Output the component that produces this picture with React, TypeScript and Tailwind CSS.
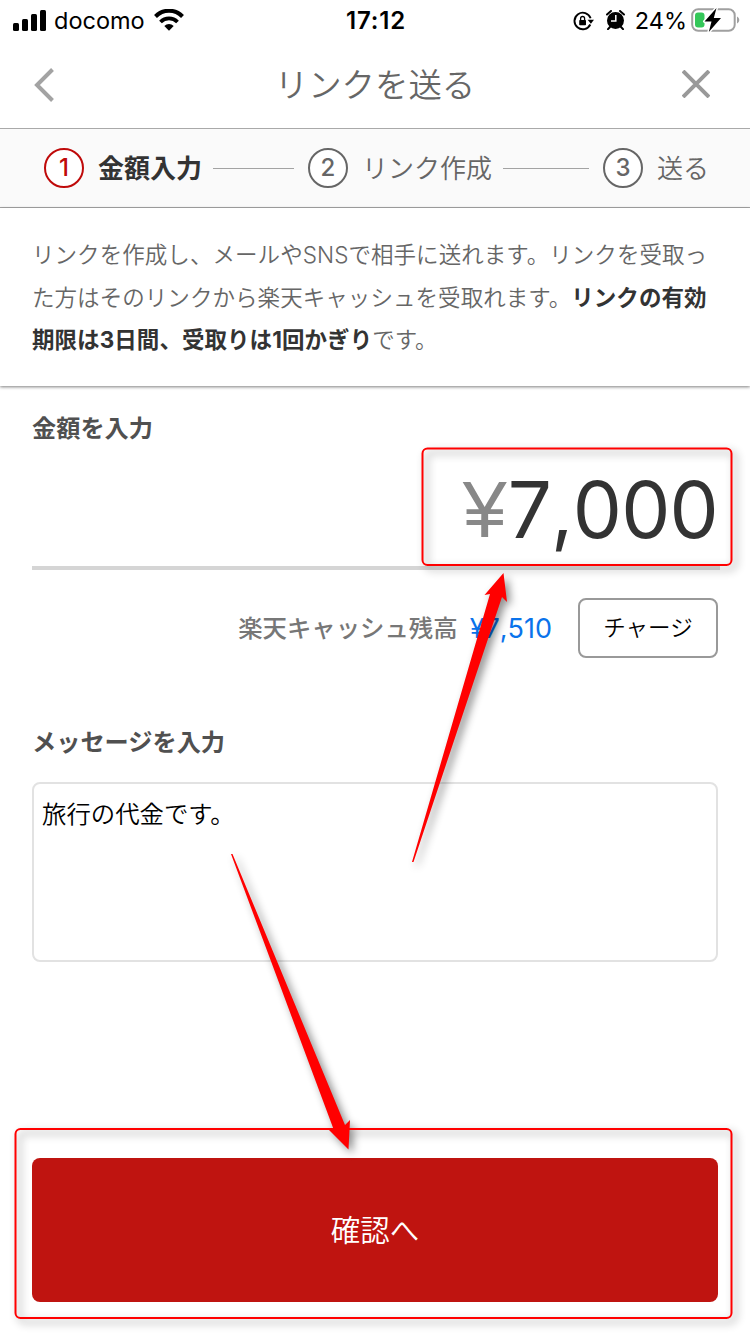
import type { ReactNode } from 'react';

interface StepProps {
  number: number;
  label: string;
  active?: boolean;
}

const DESCRIPTION = [
  'リンクを作成し、メールやSNSで相手に送れます。リンクを受取っ',
  'た方はそのリンクから楽天キャッシュを受取れます。',
];

export default function App() {
  return (
    <div className="relative flex h-[1334px] w-[750px] flex-col overflow-hidden bg-white font-['Inter','Noto_Sans_CJK_JP',sans-serif] text-[#333]">
      <StatusBar />
      <NavBar />

      <div className="flex h-20 shrink-0 items-center border-y border-[#a9a9a9] bg-[#fafafa] pl-11">
        <Step number={1} label="金額入力" active />
        <div className="mr-[14px] ml-[11px] h-px w-[81px] bg-[#a3a3a3]" />
        <Step number={2} label="リンク作成" />
        <div className="mr-[14px] ml-[11px] h-px w-[86px] bg-[#a3a3a3]" />
        <Step number={3} label="送る" />
      </div>

      <div className="h-[178px] shrink-0 pt-[26px] pl-8 text-[22.5px] leading-[42.5px] font-[350] tracking-[0.06px] whitespace-nowrap text-[#666] shadow-[0_1px_3px_rgba(0,0,0,0.5)]">
        <p>{DESCRIPTION[0]}</p>
        <p>
          {DESCRIPTION[1]}
          <strong className="font-bold text-[#333]">リンクの有効</strong>
        </p>
        <p>
          <strong className="font-bold text-[#333]">期限は3日間、受取りは1回かぎり</strong>
          です。
        </p>
      </div>

      <main className="flex flex-col px-8">
        <Heading className="mt-[25px]">金額を入力</Heading>
        <div className="mt-[15px] flex h-[108px] w-[688px] items-center justify-end border-b-4 border-[#d5d5d5] pr-[2px] pb-[9px] leading-none whitespace-nowrap">
          <span className="mr-px font-['Liberation_Sans',sans-serif] text-[79px] text-[#888]">¥</span>
          <span className="text-[78px] tracking-[-0.8px] [font-kerning:none]">7,000</span>
        </div>

        <div className="mt-7 flex h-[60px] items-center justify-end whitespace-nowrap">
          <span className="text-[24.4px] font-medium text-[#777]">楽天キャッシュ残高</span>
          <span className="mt-0.5 ml-3 text-[27px] text-[#0a73eb] [font-kerning:none]">¥7,510</span>
          <button
            type="button"
            className="ml-[26px] h-[60px] w-[140px] rounded-lg border-2 border-[#999] text-[22.5px] font-[350] text-black"
          >
            チャージ
          </button>
        </div>

        <Heading className="mt-[67px]">メッセージを入力</Heading>
        <div className="mt-[21px] h-[180px] rounded-lg border-2 border-[#e2e2e2] px-2 pt-3 text-[24.4px] leading-9 font-[350] text-black">
          旅行の代金です。
        </div>

        <button
          type="button"
          className="mt-[196px] h-36 rounded-lg bg-[#bf1410] text-[29.5px] font-[350] text-white"
        >
          確認へ
        </button>
      </main>

      <Annotations />
    </div>
  );
}

function StatusBar() {
  return (
    <div className="flex h-10 shrink-0 items-center text-black">
      <div className="flex flex-1 items-center pl-[13px]">
        <svg width="33" height="21" viewBox="0 0 33 21">
          <rect x="0" y="13" width="6" height="8" rx="1.5" />
          <rect x="9" y="9" width="6" height="12" rx="1.5" />
          <rect x="18" y="4" width="6" height="17" rx="1.5" />
          <rect x="27" y="0" width="6" height="21" rx="1.5" />
        </svg>
        <span className="mt-0.5 ml-2 text-[23.5px]">docomo</span>
        <svg className="ml-[9px]" width="30" height="22" viewBox="0 0 30 22" fill="none" stroke="#000">
          <path d="M1.5 7.5C9-.3 21-.3 28.5 7.5" strokeWidth="4" />
          <path d="M6.5 13C11.2 8.2 18.8 8.2 23.5 13" strokeWidth="3.8" />
          <path d="M10.3 17C13 14.2 17 14.2 19.7 17L15 21.8Z" fill="#000" stroke="none" />
        </svg>
      </div>
      <span className="mt-0.5 mr-px text-[24px] font-semibold tracking-[0.8px]">17:12</span>
      <div className="flex flex-1 items-center justify-end pr-[10px]">
        <svg className="mt-px" width="21" height="20" viewBox="0 0 21 20" fill="none" stroke="#000">
          <path d="M17.3 13.5A8.3 8.3 0 1 1 17.6 7.2" strokeWidth="1.9" />
          <path d="M14.6 8.7H21L17.9 12.8Z" fill="#000" stroke="none" />
          <rect x="6.2" y="9" width="6.8" height="5.3" rx=".8" fill="#000" stroke="none" />
          <path d="M7.6 9.5V7.5a2 2 0 0 1 4 0V9.5" strokeWidth="1.3" />
        </svg>
        <svg className="ml-3" width="19" height="20" viewBox="0 0 19 20">
          <circle cx="9.5" cy="10.5" r="8.5" />
          <path d="M1 4.5L5 1M18 4.5L14 1M4 17L2 19.2M15 17L17 19.2" stroke="#000" strokeWidth="2" strokeLinecap="round" />
          <path d="M9.8 5V11H5" fill="none" stroke="#fff" strokeWidth="1.5" />
        </svg>
        <span className="mt-0.5 ml-[10px] text-[23.5px]">24%</span>
        <svg className="ml-1" width="49" height="26" viewBox="0 0 49 26">
          <rect x="1.2" y="2.2" width="42.5" height="21.5" rx="6" fill="none" stroke="#a0a0a0" strokeWidth="2" />
          <path d="M46 9.5c3 1.5 3 5.5 0 7z" fill="#a0a0a0" />
          <rect x="4" y="5.5" width="9.5" height="15" rx="3" fill="#34c759" />
          <path
            d="M25.5 1L13.5 14.5H20.5L17.8 25L30 11H22.8Z"
            stroke="#fff"
            strokeWidth="3"
            strokeLinejoin="round"
            paintOrder="stroke"
          />
        </svg>
      </div>
    </div>
  );
}

function NavBar() {
  return (
    <div className="flex h-[88px] shrink-0 items-center justify-between px-8 text-[#666]">
      <svg className="mt-px" width="22" height="34" viewBox="0 0 22 34" fill="none" stroke="#a3a3a3" strokeWidth="4">
        <path d="M20.5 1.5L5 17L20.5 32.5" />
      </svg>
      <h1 className="mt-[3px] ml-[14px] text-[33.4px] font-[350]">リンクを送る</h1>
      <svg className="mr-2" width="28" height="28" viewBox="0 0 28 28" stroke="#999" strokeWidth="4">
        <path d="M1 1L27 27M27 1L1 27" />
      </svg>
    </div>
  );
}

function Step({ number, label, active = false }: StepProps) {
  return (
    <div className="flex items-center whitespace-nowrap">
      <span
        className={
          active
            ? 'grid h-10 w-10 place-items-center rounded-full border-2 border-[#bf0a0a] bg-white text-2xl leading-none font-medium text-[#bf0a0a]'
            : 'grid h-10 w-10 place-items-center rounded-full border-2 border-[#666] bg-white text-2xl leading-none font-medium text-[#666]'
        }
      >
        {number}
      </span>
      <span className={active ? 'ml-[14px] text-[26px] font-bold' : 'ml-[14px] text-[26px] font-[350] text-[#666]'}>
        {label}
      </span>
    </div>
  );
}

function Heading({ children, className }: { children: ReactNode; className: string }) {
  return <h2 className={`${className} h-9 text-[24.2px] leading-9 font-bold text-[#505050]`}>{children}</h2>;
}

// Red frames and arrows laid over the screen
function Annotations() {
  return (
    <svg
      className="pointer-events-none absolute inset-0 drop-shadow-[4px_4px_4px_rgba(0,0,0,0.45)]"
      width="750"
      height="1334"
      viewBox="0 0 750 1334"
      fill="none"
    >
      <rect x="422.5" y="448.5" width="309" height="116.5" rx="5" stroke="#f00" strokeWidth="2" />
      <rect x="15.5" y="1129" width="716" height="189" rx="5" stroke="#f00" strokeWidth="2" />
      <path d="M412 862L490 594L484.5 595L503.5 573L507 602L502 597L413.5 862Z" fill="#f00" />
      <path d="M231 854L333.5 1129H328L348.5 1149.5L350 1120L345 1125L232.5 854Z" fill="#f00" />
    </svg>
  );
}
